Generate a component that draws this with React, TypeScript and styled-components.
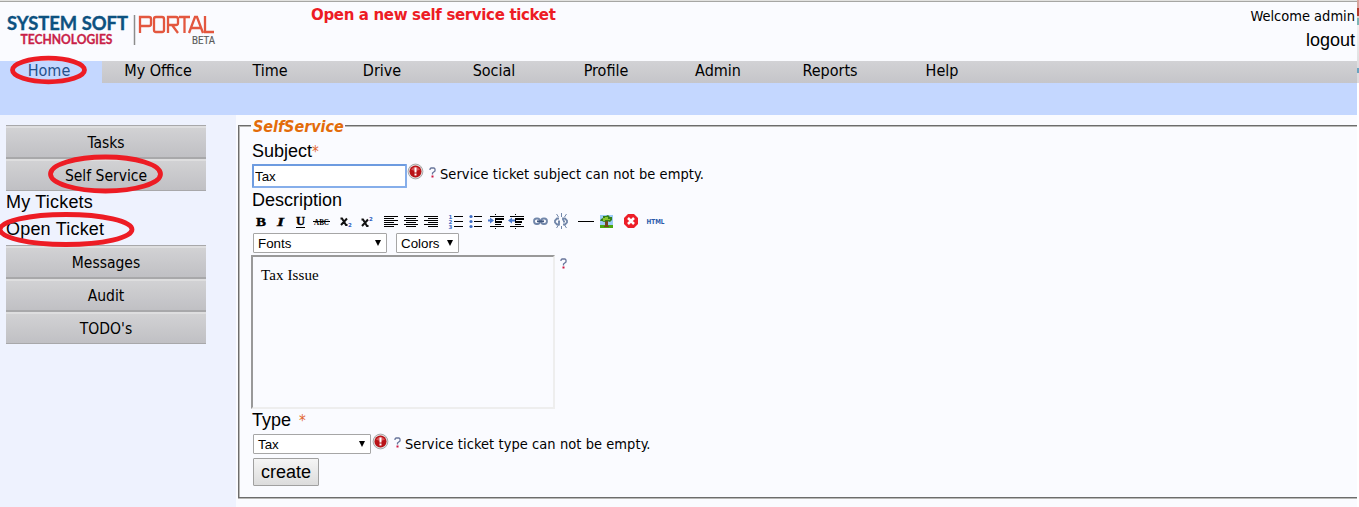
import React from 'react';
import styled, { createGlobalStyle } from 'styled-components';

const ui = '"DejaVu Sans Condensed", "DejaVu Sans", sans-serif';
const arial = '"Liberation Sans", Arial, sans-serif';

const Global = createGlobalStyle`
  * { box-sizing: border-box; }
  body { margin: 0; background: #fafbff; overflow: hidden; }
`;

const Page = styled.div`
  position: relative;
  display: flex;
  width: 1359px;
  height: 507px;
  overflow: hidden;
  color: #000;
  font-family: ${arial};
`;
const Portal = styled.div`
  display: flex;
  flex-direction: column;
  width: 1357px;
  flex: none;
  background: #fafbff;
`;
const WindowEdge = styled.div`
  width: 2px;
  height: 507px;
  flex: none;
  background: linear-gradient(#d9a49c 0 8px, #b33a2c 8px 16px, #d9d5d0 16px 18px, #7fb5b5 18px 25px, #f0f0f0 25px, #dcdcde 68px, #6aa3c0 68px 73px, #dcdcde 73px 83px, #fff 83px);
`;
const Header = styled.header`
  display: flex;
  height: 61px;
  border-top: 1px solid #e2e2e0;
  &::before { content: ''; width: 100%; height: 1px; margin-right: -100%; background: #a6a6a4; }
`;
const LogoBox = styled.div`
  width: 311px;
  flex: none;
  svg { display: block; margin-top: 9px; }
`;
const Notice = styled.div`
  flex: 1;
  padding-top: 5px;
  font: bold 15px/19px "DejaVu Sans", sans-serif;
  letter-spacing: -0.34px;
  color: #ed1c24;
`;
const Account = styled.div`
  padding: 5px 2px 0 0;
  text-align: right;
`;
const Text = styled.span<{ $size?: number; $spacing?: number }>`
  font-family: ${ui};
  font-size: ${p => p.$size ?? 15}px;
  letter-spacing: ${p => p.$spacing ?? 0}px;
  white-space: nowrap;
`;
const Welcome = styled.div`
  height: 20px;
  line-height: 20px;
`;
const Logout = styled.div`
  font-size: 18px;
  line-height: 28px;
`;
const Nav = styled.nav`
  display: flex;
  height: 22px;
  background: linear-gradient(#d2d2d5, #c5c5c9);
`;
const NavItem = styled.div<{ $active?: boolean }>`
  width: ${p => (p.$active ? 102 : 112)}px;
  padding-right: ${p => (p.$active ? 4 : 0)}px;
  height: 22px;
  line-height: 19px;
  text-align: center;
  color: ${p => (p.$active ? '#24508a' : '#000')};
  background: ${p => (p.$active ? '#c4d7ff' : 'transparent')};
`;
const Band = styled.div`
  height: 32px;
  background: #c4d7ff;
`;
const Body = styled.div`
  display: flex;
  height: 392px;
`;
const Sidebar = styled.aside`
  width: 236px;
  padding: 10px 30px 0 6px;
  background: #eef2fe;
`;
const MenuButton = styled.div`
  height: 33px;
  border-top: 1px solid #a8a8aa;
  border-bottom: 1px solid #a8a8aa;
  box-shadow: inset 0 2px #dededf;
  background: linear-gradient(#d3d3d5, #c0c0c4);
  text-align: center;
  line-height: 33px;
`;
const MenuLink = styled.div`
  height: 27px;
  font-size: 18px;
  letter-spacing: 0.2px;
  line-height: 22px;
`;
const Main = styled.main`
  flex: 1;
  padding: 10px 0 0 2px;
`;
const Panel = styled.section`
  height: 373px;
  border: solid #6c6c6c;
  border-width: 1px 0 1px 1px;
  box-shadow: inset 1px 1px #b8b8b6, 0 1px #b8b8b6;
  padding-left: 13px;
`;
const Legend = styled.div`
  width: 94px;
  height: 18px;
  margin: -9px 0 0 -1px;
  padding-left: 2px;
  background: #fafbff;
  font: italic bold 16px/19px "DejaVu Sans Condensed", sans-serif;
  letter-spacing: -0.05px;
  color: #e36c0a;
  white-space: nowrap;
`;
const Label = styled.div<{ $h: number; $pad?: number }>`
  height: ${p => p.$h}px;
  padding-top: ${p => p.$pad ?? 0}px;
  font-size: 18px;
  line-height: 22px;
`;
const Star = styled.span<{ $gap?: number }>`
  margin-left: ${p => p.$gap ?? 0}px;
  color: #e2672f;
  font: 15px/15px "DejaVu Sans Condensed", sans-serif;
`;
const Row = styled.div<{ $h: number }>`
  display: flex;
  height: ${p => p.$h}px;
  padding-left: 1px;
`;
const TextInput = styled.input`
  width: 155px;
  height: 24px;
  margin-left: -1px;
  padding: 1px 1px 0;
  border: 2px solid;
  border-color: #6d9be0 #86aeea #86aeea #6d9be0;
  border-radius: 1px;
  outline: 0;
  background: #fff;
  font: 13.33px ${arial};
`;
const Hint = styled.div`
  display: flex;
  svg { flex: none; }
  > svg:first-child { margin-top: -1px; }
`;
const Question = styled.svg`
  display: block;
  flex: none;
  margin: 3px 4px 0 5px;
`;
const Message = styled(Text)`
  line-height: 20px;
`;
const Toolbar = styled.div`
  height: 23px;
  svg { display: block; }
`;
const Select = styled.div<{ $w: number; $gap?: number }>`
  display: flex;
  align-items: center;
  justify-content: space-between;
  width: ${p => p.$w}px;
  height: 20px;
  margin-right: ${p => p.$gap ?? 9}px;
  padding: 1px 5px 0 4px;
  border: 1px solid #a6a6a6;
  border-radius: 1px;
  background: #fff;
  font-size: 13.33px;
  svg { margin-top: -2px; }
`;
const Editor = styled.div`
  width: 304px;
  height: 154px;
  margin-left: -2px;
  padding: 9px 8px;
  border: 2px solid;
  border-color: #999 #eee #eee #999;
  font: 15px/18px "Liberation Serif", serif;
  letter-spacing: 0.1px;
`;
const Create = styled.button`
  width: 66px;
  height: 28px;
  padding: 0;
  border: 1px solid #a0a0a0;
  border-radius: 1px;
  background: linear-gradient(#f5f5f5, #dcdcdc);
  font: 18px ${arial};
  color: #000;
`;
const Marks = styled.svg`
  position: absolute;
  left: 0;
  top: 0;
  pointer-events: none;
`;

const Logo = () => (
  <svg width="225" height="40" viewBox="0 10 225 40">
    <g fontFamily="Lato, sans-serif" fontWeight="700">
      <text x="7" y="30" fontSize="19" fill="#0c5180" stroke="#0c5180" strokeWidth=".4" textLength="121" lengthAdjust="spacingAndGlyphs">SYSTEM SOFT</text>
      <text x="20.5" y="44" fontSize="12.5" fill="#c91f48" stroke="#c91f48" strokeWidth=".3" textLength="92" lengthAdjust="spacingAndGlyphs">TECHNOLOGIES</text>
    </g>
    <path d="M134.500 15V45" stroke="#8c8c8c" strokeWidth="1.500" />
    <g fill="none" stroke="#e3573f" strokeWidth="2.300">
      <path d="M140 33V17H149Q151 17 151 19V24Q151 26 149 26H140M156 17H162Q164 17 164 19V30Q164 32 162 32H156Q154 32 154 30V19Q154 17 156 17ZM168 33V17H176Q178 17 178 19V23Q178 25 176 25H168M172 25L178 33M179 17H190M184.500 17V33M189 33L195 17H197L203 33M191 28H201M205 16V32H214" />
    </g>
    <text x="192" y="44" fontFamily="Roboto" fontSize="11" fill="#5b5b5b" stroke="#5b5b5b" strokeWidth=".2" textLength="23" lengthAdjust="spacingAndGlyphs">BETA</text>
  </svg>
);

const Alert = () => (
  <svg width="17" height="17" viewBox="0 0 17 17">
    <circle cx="8.500" cy="8.500" r="7.400" fill="#dedede" stroke="#a9a9a9" />
    <circle cx="8.500" cy="8.500" r="6" fill="#b91217" />
    <path d="M4 6.500Q8.500 1 13 6.500Q8.500 9 4 6.500" fill="#dc5558" />
    <path d="M8.500 4.500V9.500M8.500 10.500V12.500" stroke="#fff" strokeWidth="2" />
  </svg>
);

const Help = () => (
  <Question width="7" height="11" viewBox="0 0 7 11">
    <path d="M1 3V2L2 1H5L6 2V4L3.500 6V7.500" fill="none" stroke="#68759b" strokeWidth="1.300" />
    <path d="M2.500 8.500h2v2h-2z" fill="#cf1742" />
  </Question>
);

const Arrow = () => (
  <svg width="6" height="6" viewBox="0 0 6 6"><path d="M0 0H6L3 6Z" /></svg>
);

const lines = (x: number, a: 'start' | 'mid' | 'end') =>
  [0, 1, 2, 3, 4, 5].map(i => {
    const w = i % 2 ? 10 : 14;
    const off = a === 'start' ? 0 : a === 'mid' ? (14 - w) / 2 : 14 - w;
    return `M${x + off} ${6.5 + i * 2}h${w}`;
  }).join('');

const EditorIcons = () => (
  <svg width="420" height="23" viewBox="252 210 420 23">
    <g fontFamily="Liberation Serif" fontSize="13" fontWeight="700" stroke="#000" strokeWidth=".4">
      <text x="256" y="226" textLength="10" lengthAdjust="spacingAndGlyphs">B</text>
      <text x="277" y="226" fontStyle="italic" textLength="7" lengthAdjust="spacingAndGlyphs">I</text>
      <text x="296" y="225" fontSize="12" textLength="9" lengthAdjust="spacingAndGlyphs">U</text>
    </g>
    <path d="M296 227.500h9M313 221.500h17" stroke="#000" />
    <text x="314" y="225" fontFamily="Liberation Serif" fontSize="9" fontWeight="700" textLength="15" lengthAdjust="spacingAndGlyphs">ABC</text>
    <g fill="none" stroke="#111" strokeWidth="2">
      <path d="M340.500 218.500h1.500l4 6.500h1.500M347 218.500l-6 6.500M361.500 219.500h1.500l4 6.500h1.500M368 219.500l-6 6.500" />
    </g>
    <g fontFamily="DejaVu Sans" fontWeight="700" fontSize="5.500" fill="#315fc0">
      <text x="348" y="227">2</text>
      <text x="369" y="220.500">2</text>
    </g>
    <path transform="translate(0 210)" d={lines(384, 'start') + lines(404, 'mid') + lines(424, 'end')} stroke="#000" />
    <g fill="#3e6cc4" fontFamily="DejaVu Sans" fontSize="5.500" fontWeight="700">
      <text x="448.500" y="219">1</text><text x="448.500" y="224">2</text><text x="448.500" y="229">3</text>
      <circle cx="471" cy="216.500" r="1.600" /><circle cx="471" cy="221.500" r="1.600" /><circle cx="471" cy="226.500" r="1.600" />
    </g>
    <path d="M454 216.500h9m-9 5h9m-9 5h9M474 216.500h8m-8 5h8m-8 5h8" stroke="#000" />
    {[488, 508].map((x, i) => (
      <g key={x}>
        <path d={`M${x + 2} 216.500h14M${x + 2} 226.500h14M${x + 7} 224.500h6`} stroke="#000" />
        <path d={`M${x + 7} 219h9M${x + 7} 222h7`} stroke="#000" strokeWidth="2" />
        <path d={`M${x + 7.5} 214v15`} stroke="#000" strokeDasharray="1 1" />
        <path d={i ? `M${x} 220.500l4-3v2h3v2h-3v2z` : `M${x + 6} 220.500l-4-3v2h-2v2h2v2z`} fill="#4c79cc" />
      </g>
    ))}
    <g fill="none" stroke="#7287aa" strokeWidth="1.800">
      <rect x="534" y="218.500" width="6" height="5.500" rx="2.700" />
      <rect x="541" y="218.500" width="6" height="5.500" rx="2.700" />
      <path d="M537 221.300h7" stroke="#42587e" />
      <path d="M559 218.500h-2l-2 2v2l2 2h2v-2M563 224.500h2l2-2v-2l-2-2h-2v2M558 221.500h2M563 221.500h2" />
      <path strokeWidth="1" d="M561.500 213v4m-5-3l2 3m8-3l-2 3m-3 9v3m-5-1l2-3m8 3l-2-3" />
    </g>
    <path d="M578 221.500h16" stroke="#000" />
    <path d="M600 215h13v10h-13z" fill="#9bcbf5" />
    <path d="M600 225h13v3h-13z" fill="#4ba70f" />
    <path d="M605 220h3v6h1v1h-5v-1h1z" fill="#76451f" />
    <path d="M601 219l2-1v-2h3l2-1 2 2h2v3l-2 2-3-1-3 1-2-1h-2z" fill="#347f19" />
    <path d="M603 218h2v-1h3v2h2v1h-5v1h-2z" fill="#8ac52f" />
    <path d="M628 214h6l4 4v6l-4 4h-6l-4-4v-6z" fill="#ed1f28" />
    <path d="M628 218l6 6m0-6l-6 6" stroke="#fff" strokeWidth="2.500" />
    <text x="646.500" y="224" fontFamily="DejaVu Sans" fontSize="7" fontWeight="700" fill="#285aaa" textLength="18" lengthAdjust="spacingAndGlyphs">HTML</text>
  </svg>
);

const tabs = ['My Office', 'Time', 'Drive', 'Social', 'Profile', 'Admin', 'Reports', 'Help'];

export default function App() {
  return (
    <Page>
      <Global />
      <Portal>
        <Header>
          <LogoBox><Logo /></LogoBox>
          <Notice>Open a new self service ticket</Notice>
          <Account>
            <Welcome><Text $size={14.5}>Welcome admin</Text></Welcome>
            <Logout>logout</Logout>
          </Account>
        </Header>
        <Nav>
          <NavItem $active><Text $size={16}>Home</Text></NavItem>
          {tabs.map(t => <NavItem key={t}><Text $size={16}>{t}</Text></NavItem>)}
        </Nav>
        <Band />
        <Body>
          <Sidebar>
            {['Tasks', 'Self Service'].map(t => <MenuButton key={t}><Text $size={15.5}>{t}</Text></MenuButton>)}
            <MenuLink>My Tickets</MenuLink>
            <MenuLink>Open Ticket</MenuLink>
            {['Messages', 'Audit', "TODO's"].map(t => <MenuButton key={t}><Text $size={15.5}>{t}</Text></MenuButton>)}
          </Sidebar>
          <Main>
            <Panel>
              <Legend>SelfService</Legend>
              <Label $h={29} $pad={5}>Subject<Star>*</Star></Label>
              <Row $h={25}>
                <TextInput defaultValue="Tax" />
                <Hint><Alert /><Help /><Message $size={14.5} $spacing={0.06}>Service ticket subject can not be empty.</Message></Hint>
              </Row>
              <Label $h={21}>Description</Label>
              <Toolbar><EditorIcons /></Toolbar>
              <Row $h={22}>
                <Select $w={134}>Fonts<Arrow /></Select>
                <Select $w={63}>Colors<Arrow /></Select>
              </Row>
              <Row $h={154}>
                <Editor>Tax Issue</Editor>
                <Help />
              </Row>
              <Label $h={25}>Type<Star $gap={8}>*</Star></Label>
              <Row $h={24}>
                <Select $w={118} $gap={1}>Tax<Arrow /></Select>
                <Hint><Alert /><Help /><Message $size={14.5} $spacing={0.06}>Service ticket type can not be empty.</Message></Hint>
              </Row>
              <Row $h={28}><Create>create</Create></Row>
            </Panel>
          </Main>
        </Body>
      </Portal>
      <WindowEdge />
      <Marks width="180" height="260" fill="none" stroke="#ed1c24" strokeWidth="4.800">
        <ellipse cx="48.500" cy="70" rx="36" ry="11.800" />
        <ellipse cx="105.500" cy="174" rx="55" ry="17" />
        <ellipse cx="66" cy="229.500" rx="66" ry="15" />
      </Marks>
    </Page>
  );
}
